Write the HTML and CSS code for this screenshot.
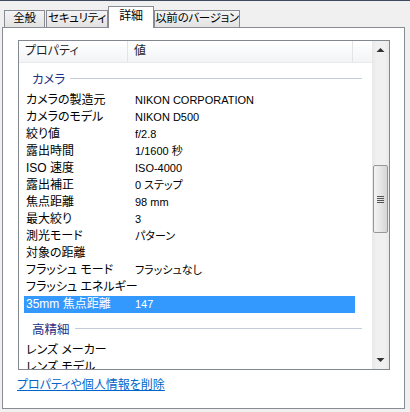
FILE: index.html
```html
<!DOCTYPE html>
<html lang="ja">
<head>
<meta charset="utf-8">
<link rel="stylesheet" href="styles.css">
</head>
<body>
<div class="window">
  <div class="tabs">
    <div class="tab t1">全般</div>
    <div class="tab t2">セキュリティ</div>
    <div class="tab t3 active">詳細</div>
    <div class="tab t4">以前のバージョン</div>
  </div>
  <div class="panel">
    <div class="list">
      <div class="content">
        <div class="header">
          <div class="hcol c1">プロパティ</div>
          <div class="hcol c2">値</div>
          <div class="hcol c3"></div>
        </div>
        <div class="group"><span>カメラ</span><i class="gline"></i></div>
        <div class="row"><span class="name">カメラの製造元</span><span class="val">NIKON CORPORATION</span></div>
        <div class="row"><span class="name">カメラのモデル</span><span class="val">NIKON D500</span></div>
        <div class="row"><span class="name">絞り値</span><span class="val">f/2.8</span></div>
        <div class="row"><span class="name">露出時間</span><span class="val">1/1600 秒</span></div>
        <div class="row"><span class="name">ISO 速度</span><span class="val">ISO-4000</span></div>
        <div class="row"><span class="name">露出補正</span><span class="val">0 ステップ</span></div>
        <div class="row"><span class="name">焦点距離</span><span class="val">98 mm</span></div>
        <div class="row"><span class="name">最大絞り</span><span class="val">3</span></div>
        <div class="row"><span class="name">測光モード</span><span class="val">パターン</span></div>
        <div class="row"><span class="name">対象の距離</span><span class="val"></span></div>
        <div class="row"><span class="name">フラッシュ モード</span><span class="val">フラッシュなし</span></div>
        <div class="row"><span class="name">フラッシュ エネルギー</span><span class="val"></span></div>
        <div class="row selected"><span class="name">35mm 焦点距離</span><span class="val">147</span></div>
        <div class="group"><span>高精細</span><i class="gline"></i></div>
        <div class="row"><span class="name">レンズ メーカー</span><span class="val"></span></div>
        <div class="row"><span class="name">レンズ モデル</span><span class="val"></span></div>
      </div>
      <div class="scrollbar">
        <div class="arrow"><svg width="17" height="17" viewBox="0 0 17 17"><path d="M4.5 11 L8.5 7 L12.5 11 Z" fill="#333"/></svg></div>
        <div class="track"><div class="thumb"><svg width="7" height="7" viewBox="0 0 7 7"><path d="M0 0.5H7M0 2.5H7M0 4.5H7M0 6.5H7" stroke="#555" stroke-width="1"/></svg></div></div>
        <div class="arrow"><svg width="17" height="17" viewBox="0 0 17 17"><path d="M4.5 6 L8.5 10 L12.5 6 Z" fill="#333"/></svg></div>
      </div>
    </div>
    <a class="link" href="#">プロパティや個人情報を削除</a>
  </div>
</div>
</body>
</html>
```
FILE: styles.css
```css
html, body {
  margin: 0;
  padding: 0;
  background: #f0f0f0;
}
body {
  font-family: "Liberation Sans", "Noto Sans CJK JP", sans-serif;
  font-size: 12px;
  font-feature-settings: "palt";
  color: #000;
}
.window {
  width: 410px;
  height: 412px;
  box-sizing: border-box;
  border-top: 1px solid #3d4b5c;
  overflow: hidden;
}
.tabs {
  display: flex;
  align-items: flex-end;
  height: 26px;
  padding-left: 4px;
}
.tab {
  box-sizing: border-box;
  height: 17px;
  line-height: 15px;
  border: 1px solid #898c95;
  border-bottom: none;
  background: linear-gradient(#f4f4f4, #e2e2e2);
  text-align: center;
  margin-right: 1px;
  color: #000;
  white-space: nowrap;
  font-size: 11.5px;
  letter-spacing: -0.3px;
}
.t1 { width: 41px; }
.t2 { width: 62px; margin-right: 0; }
.t3 { width: 46px; }
.t4 { width: 86px; }
.tab.active {
  position: relative;
  z-index: 1;
  height: 22px;
  line-height: 19px;
  background: #fff;
  margin-bottom: -1px;
  margin-right: 0;
  font-size: 12px;
}
.panel {
  box-sizing: border-box;
  margin-left: 2px;
  width: 403px;
  height: 382px;
  border: 1px solid #898c95;
  background: #fff;
  padding: 12px 0 0 15px;
}
.list {
  box-sizing: border-box;
  width: 372px;
  height: 330px;
  border: 1px solid #828790;
  display: flex;
}
.content {
  flex: 1;
  overflow: hidden;
}
.header {
  display: flex;
  height: 22px;
  background: linear-gradient(#ffffff, #f3f4f6);
  border-bottom: 1px solid #eaeaea;
  box-sizing: border-box;
}
.hcol {
  box-sizing: border-box;
  line-height: 21px;
  padding-left: 6px;
  color: #1e1e1e;
}
.c1 { width: 109px; border-right: 1px solid #e3e4e6; }
.c2 { width: 225px; border-right: 1px solid #e3e4e6; padding-left: 6px; }
.c3 { flex: 1; }
.group {
  display: flex;
  align-items: center;
  height: 29px;
  padding: 2px 10px 0 13px;
  box-sizing: border-box;
  color: #1e3287;
  font-size: 12.5px;
}
.gline {
  flex: 1;
  height: 1px;
  background: #c3cad9;
  margin-left: 5px;
}
.row {
  display: flex;
  height: 17px;
  line-height: 17px;
  margin: 0 17px 0 5px;
  padding-left: 2px;
  white-space: nowrap;
}
.name {
  width: 109px;
  flex: none;
}
.val {
  font-size: 11px;
}
.row.selected {
  background: #3399ff;
  color: #fff;
}
.scrollbar {
  width: 17px;
  flex: none;
  display: flex;
  flex-direction: column;
  background: linear-gradient(90deg, #e8e8e8, #f0f0f0 25%, #f0f0f0 75%, #e8e8e8);
}
.arrow {
  height: 17px;
  flex: none;
}
.arrow svg { display: block; }
.track {
  flex: 1;
}
.thumb {
  box-sizing: border-box;
  margin: 107px 1px 0 1px;
  height: 68px;
  border: 1px solid #979797;
  border-radius: 2px;
  background: linear-gradient(90deg, #f3f3f3, #e6e6e6 50%, #d6d6d6);
  display: flex;
  align-items: center;
  justify-content: center;
}
.thumb svg { display: block; }
.link {
  display: inline-block;
  margin: 7px 0 0 -1px;
  color: #0066cc;
  text-decoration: underline;
  line-height: 16px;
}
```
